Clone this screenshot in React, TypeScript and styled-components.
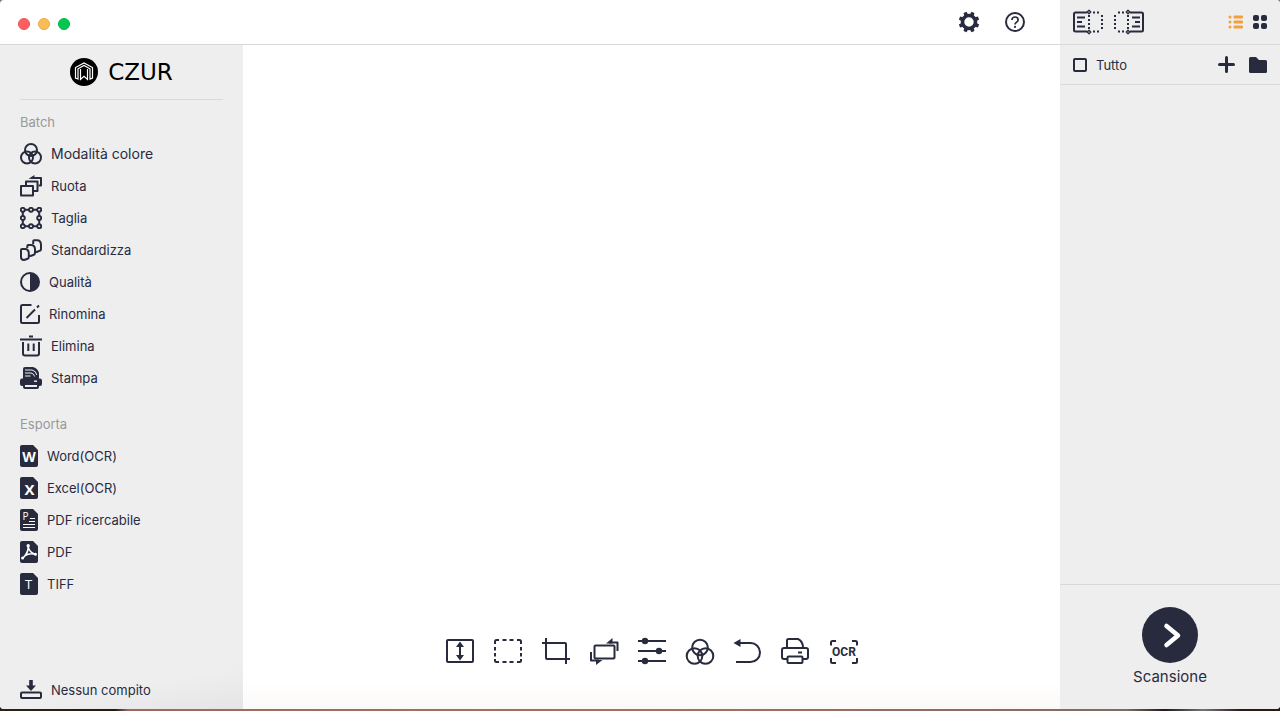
import React from "react";
import styled, { createGlobalStyle } from "styled-components";

const ink = "#282b3e";
const panel = "#eeeeee";
const line = "#d9d9d9";
const accent = "#f2a03d";

const GlobalStyle = createGlobalStyle`
  *, *::before, *::after { box-sizing: border-box; }
  body { margin: 0; background: #777; }
  body, button, input {
    font-family: Inter, "Liberation Sans", sans-serif;
    color: ${ink};
  }
  button {
    padding: 0;
    border: 0;
    background: none;
    cursor: pointer;
  }
  svg { display: block; flex: none; }
`;

/* ---------- Window frame ---------- */

const Desktop = styled.div`
  min-height: 100vh;
  display: flex;
  padding-bottom: 2px;
  background:
    linear-gradient(90deg, #2a2418 0, #241a14 9%, #9b6a5f 10%, #a86e62 50%, #7f6c5e 88%, #211a18 91%, #77737a 94%, #2c1715 97%)
      bottom / 100% 6px no-repeat,
    #777;
`;

const Window = styled.div`
  flex: 1;
  display: flex;
  border-radius: 4px;
  overflow: hidden;
  background: #fff;
`;

const Main = styled.div`
  flex: 1;
  min-width: 0;
  display: flex;
  flex-direction: column;
`;

const TitleBar = styled.header`
  height: 45px;
  display: flex;
  align-items: center;
  justify-content: space-between;
  padding: 0 22px 0 18px;
  border-bottom: 1px solid ${line};
`;

const Lights = styled.div`
  display: flex;
  gap: 8px;
  padding-top: 4px;
`;

const Light = styled.button<{ $color: string; $edge: string }>`
  width: 12px;
  height: 12px;
  border: 1px solid ${(p) => p.$edge};
  border-radius: 50%;
  background: ${(p) => p.$color};
`;

const TitleActions = styled.div`
  display: flex;
`;

const TitleButton = styled.button`
  width: 46px;
  height: 44px;
  display: grid;
  place-items: center;
`;

const Body = styled.div`
  flex: 1;
  display: flex;
`;

/* ---------- Sidebar ---------- */

const Sidebar = styled.aside`
  width: 243px;
  flex: none;
  display: flex;
  flex-direction: column;
  padding: 0 20px 3px;
  background: linear-gradient(170deg, transparent 94%, rgba(0, 0, 0, 0.04)) ${panel};
`;

const Brand = styled.div`
  height: 55px;
  display: flex;
  align-items: center;
  justify-content: center;
  gap: 10px;
  margin-bottom: 6px;
  border-bottom: 1px solid ${line};
`;

const BrandName = styled.span`
  font: 23px/28px "DejaVu Sans", sans-serif;
  color: #000;
`;

const Group = styled.section`
  margin-bottom: 14px;
`;

const GroupTitle = styled.h2`
  margin: 0;
  font-size: 13px;
  line-height: 32px;
  font-weight: 400;
  color: #999;
`;

const List = styled.ul`
  margin: 0;
  padding: 0;
  list-style: none;
`;

const SideButton = styled.button<{ $large?: boolean }>`
  width: 100%;
  height: 32px;
  display: flex;
  align-items: center;
  gap: 9px;
  font-size: ${(p) => (p.$large ? 14 : 13)}px;
  line-height: 20px;
  text-align: left;
`;

const SideFooter = styled.div`
  margin-top: auto;
`;

/* ---------- Canvas ---------- */

const Canvas = styled.main`
  flex: 1;
  min-width: 0;
  display: flex;
  flex-direction: column;
  justify-content: flex-end;
  padding-bottom: 34px;
  background: linear-gradient(#fff 96%, #fbf9f8);
`;

const Toolbar = styled.div`
  display: flex;
  justify-content: center;
`;

const ToolButton = styled.button`
  width: 48px;
  height: 48px;
  display: grid;
  place-items: center;
`;

/* ---------- Page panel ---------- */

const PagePanel = styled.aside`
  width: 220px;
  flex: none;
  display: flex;
  flex-direction: column;
  background: ${panel};
`;

const PanelRow = styled.div<{ $height: number }>`
  height: ${(p) => p.$height}px;
  display: flex;
  align-items: center;
  justify-content: space-between;
  padding: 0 13px;
  border-bottom: 1px solid ${line};
`;

const Cluster = styled.div<{ $gap: number }>`
  display: flex;
  align-items: center;
  gap: ${(p) => p.$gap}px;
`;

const SelectAll = styled.label`
  display: flex;
  align-items: center;
  gap: 9px;
  font-size: 13px;
  line-height: 20px;
`;

const Check = styled.input`
  appearance: none;
  width: 14px;
  height: 14px;
  margin: 0;
  border: 2px solid ${ink};
  border-radius: 2px;
  &:checked { background: ${ink}; }
`;

const PageList = styled.div`
  flex: 1;
`;

const ScanArea = styled.footer`
  height: 125px;
  display: flex;
  justify-content: center;
  align-items: flex-start;
  padding-top: 22px;
  border-top: 1px solid ${line};
`;

const ScanButton = styled.button`
  display: flex;
  flex-direction: column;
  align-items: center;
  gap: 2px;
  font-size: 15px;
  line-height: 24px;
`;

/* ---------- Icons ---------- */

type IconProps = { w: number; h: number; sw?: number; children: React.ReactNode };

const Icon = ({ w, h, sw = 2, children }: IconProps) => (
  <svg
    width={w}
    height={h}
    viewBox={`0 0 ${w} ${h}`}
    fill="none"
    stroke={ink}
    strokeWidth={sw}
    strokeLinejoin="round"
    aria-hidden="true"
  >
    {children}
  </svg>
);

const ColorIcon = () => (
  <Icon w={22} h={22}>
    <circle cx="11" cy="7" r="6" />
    <circle cx="7" cy="14.500" r="6" />
    <circle cx="15" cy="14.500" r="6" />
  </Icon>
);

const RotateIcon = () => (
  <Icon w={22} h={22}>
    <rect x="1" y="11" width="12" height="9.500" />
    <path d="M6 10.500V6.500H17.500V16H14" />
    <path d="M11 3H21V10.500H18.500" />
    <path d="M8.500 3.800L14.500 0V4Z" fill={ink} stroke="none" />
  </Icon>
);

const CropFrameIcon = () => (
  <Icon w={22} h={22}>
    <path d="M5 2.800H9M13 2.800H17M5 19.200H9M13 19.200H17M2.800 5V9M2.800 13V17M19.200 5V9M19.200 13V17" />
    {[
      [2.8, 2.8], [11, 2.8], [19.2, 2.8],
      [2.8, 11], [19.2, 11],
      [2.8, 19.2], [11, 19.2], [19.2, 19.2],
    ].map(([x, y]) => (
      <circle key={`${x}-${y}`} cx={x} cy={y} r="2" strokeWidth="1.9" />
    ))}
  </Icon>
);

const StandardIcon = () => (
  <Icon w={22} h={22}>
    <path d="M1 11Q1 10 2 10H5C8 10 8.800 12 8.800 14.500V18Q8.800 19.300 7.700 19.700L4 21C2 21 1 20 1 18Z" />
    <path d="M7.300 9V7Q7.300 6 8.300 6H11C14 6 15 8 15 10.500V14Q15 15.300 13.900 15.700L10.500 17L9 16.600" />
    <path d="M13.200 5V2.200Q13.200 1.200 14.200 1.200H17C20 1.200 21 3.500 21 6V10Q21 11.300 19.900 11.700L16.800 13L15.200 12.600" />
  </Icon>
);

const QualityIcon = () => (
  <Icon w={20} h={20}>
    <circle cx="10" cy="10" r="9" />
    <path d="M10 1a9 9 0 0 1 0 18z" fill={ink} stroke="none" />
  </Icon>
);

const RenameIcon = () => (
  <Icon w={20} h={20}>
    <path d="M11.500 1H2.500Q1 1 1 2.500V17.500Q1 19 2.500 19H17.500Q19 19 19 17.500V11" />
    <path d="M6.500 14L15 5.500M17 3.500L19 1.500" />
  </Icon>
);

const TrashIcon = () => (
  <Icon w={22} h={22}>
    <path d="M9 1.500H13M0 4.500H22M3 7V18.500Q3 20.500 5 20.500H17Q19 20.500 19 18.500V7M8.300 8.500V16M13.700 8.500V16" />
  </Icon>
);

const PrintStackIcon = () => (
  <Icon w={22} h={22}>
    <path d="M3 2Q3 0 5 0H13Q18.500 1.500 19 7V12H3Z" fill={ink} stroke="none" />
    <path d="M5 3H12Q16 3.800 16.800 8M5 6H11Q14 6.500 14.600 9.500M5 9H10.500" stroke={panel} strokeWidth="1" />
    <rect x="0" y="11.500" width="22" height="7.500" rx="2" fill={ink} stroke="none" />
    <rect x="14" y="13.500" width="3" height="1.400" fill={panel} stroke="none" />
    <rect x="4" y="17" width="14" height="4" rx="1" fill={panel} />
  </Icon>
);

const DocIcon = ({ children }: { children: React.ReactNode }) => (
  <Icon w={18} h={22}>
    <path d="M2 0H13L18 5V20Q18 22 16 22H2Q0 22 0 20V2Q0 0 2 0Z" fill={ink} stroke="none" />
    {children}
  </Icon>
);

const DocLetter = styled.text<{ $size: number; $weight: number }>`
  font-family: "Open Sans", sans-serif;
  font-size: ${(p) => p.$size}px;
  font-weight: ${(p) => p.$weight};
  fill: #fff;
  stroke: none;
  text-anchor: middle;
`;

const WordIcon = () => (
  <DocIcon><DocLetter $size={14} $weight={700} x="9" y="17">W</DocLetter></DocIcon>
);

const ExcelIcon = () => (
  <DocIcon><DocLetter $size={15} $weight={700} x="9.500" y="18">X</DocLetter></DocIcon>
);

const SearchPdfIcon = () => (
  <DocIcon>
    <DocLetter $size={10} $weight={400} x="5.500" y="11">P</DocLetter>
    <path d="M10 9.500H15M9 12.500H15M3 15.500H15M3 18.500H15" stroke="#fff" strokeWidth="1" />
  </DocIcon>
);

const PdfIcon = () => (
  <DocIcon>
    <g stroke="#fff" strokeWidth="1.600">
      <path d="M8.200 5.500C8.500 9.500 7 13 2.800 17.200M8.200 5.500C8.800 9.500 11 12 15.500 13.200M5 14.500C8 12.800 11.500 12.300 15 13.200" />
      <circle cx="8.200" cy="4.800" r=".9" />
      <circle cx="2.600" cy="17" r=".7" />
      <circle cx="15.500" cy="13.200" r=".7" />
    </g>
  </DocIcon>
);

const TiffIcon = () => (
  <DocIcon><DocLetter $size={13} $weight={400} x="8.500" y="16">T</DocLetter></DocIcon>
);

const TaskIcon = () => (
  <Icon w={22} h={22}>
    <rect x="1" y="13.500" width="20" height="5.500" rx="1" />
    <path d="M9.200 1H12.800V6.500H16L11 12L6 6.500H9.200Z" fill={ink} stroke="none" />
  </Icon>
);

const FitIcon = () => (
  <Icon w={30} h={30}>
    <rect x="2" y="4" width="26" height="22" rx="1" />
    <path d="M15 9V21" />
    <path d="M15 5.500L19 11H11ZM15 24.500L19 19H11Z" fill={ink} stroke="none" />
  </Icon>
);

const SelectIcon = () => (
  <Icon w={30} h={30}>
    <path d="M2 8V5.500Q2 4 3.500 4H6M9.500 4H13.500M16.500 4H20.500M24 4H26.500Q28 4 28 5.500V8M28 11V14.500M28 17V20.500M28 23V24.500Q28 26 26.500 26H24M20.500 26H16.500M13.500 26H9.500M6 26H3.500Q2 26 2 24.500V23M2 20.500V17M2 14.500V11" />
  </Icon>
);

const CropIcon = () => (
  <Icon w={30} h={30}>
    <path d="M5 2V22Q5 23 6 23H29M1 7H24Q25 7 25 8V28" />
  </Icon>
);

const RotatePageIcon = () => (
  <Icon w={30} h={30}>
    <rect x="5.500" y="9.500" width="20" height="13" rx="1" />
    <path d="M20 6.500H28.500V15M2 16V24.500H10" />
    <path d="M17 7.500L23.500 2V7.500ZM13.500 24L7 29V24Z" fill={ink} stroke="none" />
  </Icon>
);

const SlidersIcon = () => (
  <Icon w={30} h={30}>
    <path d="M1 5H29M1 15H29M1 25H29" />
    <g fill={ink} stroke="none">
      <circle cx="8" cy="5" r="3.200" />
      <circle cx="22" cy="15" r="3.200" />
      <circle cx="8" cy="25" r="3.200" />
    </g>
  </Icon>
);

const ColorLargeIcon = () => (
  <Icon w={30} h={30}>
    <circle cx="15" cy="11.500" r="7.800" />
    <circle cx="9.500" cy="20" r="7.800" />
    <circle cx="20.500" cy="20" r="7.800" />
  </Icon>
);

const UndoIcon = () => (
  <Icon w={30} h={30}>
    <path d="M5 7H17.500a9.500 9.500 0 0 1 0 19H3" />
    <path d="M0.500 7L7.500 3V11Z" fill={ink} stroke="none" />
  </Icon>
);

const PrinterIcon = () => (
  <Icon w={30} h={30}>
    <path d="M6 11V4.500Q6 3 7.500 3H17Q21.500 5 22 11" />
    <path d="M6 23H3Q1 23 1 21V14Q1 12 3 12H25Q27 12 27 14V21Q27 23 25 23H22M17 16.500H21" />
    <rect x="6.500" y="20.500" width="15" height="6.500" rx="1" />
  </Icon>
);

const OcrLabel = styled.text`
  font: 700 12px Roboto, sans-serif;
  fill: ${ink};
  stroke: none;
  text-anchor: middle;
`;

const OcrIcon = () => (
  <Icon w={30} h={30}>
    <path d="M2 9.500V6.500Q2 5 3.500 5H7M23 5H26.500Q28 5 28 6.500V9.500M28 22V25.500Q28 27 26.500 27H23M7 27H3.500Q2 27 2 25.500V22" />
    <OcrLabel x="15" y="20">OCR</OcrLabel>
  </Icon>
);

const GearIcon = () => (
  <Icon w={22} h={22}>
    <circle cx="11" cy="11" r="6.500" strokeWidth="3.600" />
    {[22.5, 67.5, 112.5, 157.5, 202.5, 247.5, 292.5, 337.5].map((a) => (
      <path key={a} d="M8.800 4.500L9.400 0.700H12.600L13.200 4.500Z" fill={ink} stroke="none" transform={`rotate(${a} 11 11)`} />
    ))}
  </Icon>
);

const HelpIcon = () => (
  <Icon w={20} h={20}>
    <circle cx="10" cy="10" r="9" />
    <path d="M6.900 8C6.900 6.200 8.200 5 10 5S13.100 6.200 13.100 7.900C13.100 10 10 10.200 10 12.600" strokeWidth="1.700" />
    <circle cx="10" cy="14.900" r="1.100" fill={ink} stroke="none" />
  </Icon>
);

const SplitIcon = ({ mirrored }: { mirrored?: boolean }) => (
  <Icon w={30} h={26}>
    <g transform={mirrored ? "translate(30 0) scale(-1 1)" : undefined}>
      <path d="M14 3.500H2.500Q1 3.500 1 5V21Q1 22.500 2.500 22.500H14" />
      <path d="M4 8.500H12M4 13H9M4 17.500H12" />
      <path d="M16 6V21M20 3.500H28M29 6V22M20 22.500H28" strokeDasharray="2 2" />
      <path d="M16 1.200L17.800 3L16 4.800L14.200 3ZM16 21.200L17.800 23L16 24.800L14.200 23Z" fill={panel} strokeWidth="1.300" />
    </g>
  </Icon>
);

const ListIcon = () => (
  <Icon w={15} h={14}>
    <g fill={accent} stroke="none">
      {[0.5, 5.5, 10.5].map((y) => (
        <React.Fragment key={y}>
          <rect x="0.500" y={y} width="3" height="3" rx="1.500" />
          <rect x="5.500" y={y} width="9.500" height="3" rx="1.200" />
        </React.Fragment>
      ))}
    </g>
  </Icon>
);

const GridIcon = () => (
  <Icon w={14} h={14}>
    <g fill={ink} stroke="none">
      <rect x="0" y="0" width="6" height="6" rx="2" />
      <rect x="8" y="0" width="6" height="6" rx="2" />
      <rect x="0" y="8" width="6" height="6" rx="2" />
      <rect x="8" y="8" width="6" height="6" rx="2" />
    </g>
  </Icon>
);

const PlusIcon = () => (
  <Icon w={17} h={17} sw={3}>
    <path d="M8.500 1.500V15.500M1.500 8.500H15.500" strokeLinecap="round" />
  </Icon>
);

const FolderIcon = () => (
  <Icon w={18} h={16}>
    <path d="M0 1.500Q0 0 1.500 0H7L10 3H16.500Q18 3 18 4.500V14.500Q18 16 16.500 16H1.500Q0 16 0 14.500Z" fill={ink} stroke="none" />
  </Icon>
);

const BrandMark = () => (
  <svg width="28" height="28" viewBox="0 0 28 28" fill="none" stroke="#fff" strokeWidth="1.200" aria-hidden="true">
    <circle cx="14" cy="14" r="14" fill="#000" stroke="none" />
    <path d="M8 21L5.500 20V9.500L14 5L22.500 9.500V20L20 21V10.800L14 7.500L8 10.800Z" />
    <path d="M10.500 11V21.500L14 18.300L17.500 21.500V11" />
  </svg>
);

const ScanIcon = () => (
  <svg width="56" height="56" viewBox="0 0 56 56" fill="none" aria-hidden="true">
    <circle cx="28" cy="28" r="28" fill={ink} />
    <path d="M24.500 19L36 28.500L24.500 38" stroke="#fff" strokeWidth="4.500" strokeLinecap="round" strokeLinejoin="round" />
  </svg>
);

/* ---------- Data ---------- */

type Item = { label: string; icon: React.ComponentType; large?: boolean };

const batch: Item[] = [
  { label: "Modalità colore", icon: ColorIcon, large: true },
  { label: "Ruota", icon: RotateIcon },
  { label: "Taglia", icon: CropFrameIcon },
  { label: "Standardizza", icon: StandardIcon },
  { label: "Qualità", icon: QualityIcon },
  { label: "Rinomina", icon: RenameIcon },
  { label: "Elimina", icon: TrashIcon },
  { label: "Stampa", icon: PrintStackIcon },
];

const exportsList: Item[] = [
  { label: "Word(OCR)", icon: WordIcon },
  { label: "Excel(OCR)", icon: ExcelIcon },
  { label: "PDF ricercabile", icon: SearchPdfIcon },
  { label: "PDF", icon: PdfIcon },
  { label: "TIFF", icon: TiffIcon },
];

const tools: Item[] = [
  { label: "Adatta", icon: FitIcon },
  { label: "Seleziona", icon: SelectIcon },
  { label: "Taglia", icon: CropIcon },
  { label: "Ruota", icon: RotatePageIcon },
  { label: "Regola", icon: SlidersIcon },
  { label: "Modalità colore", icon: ColorLargeIcon },
  { label: "Annulla", icon: UndoIcon },
  { label: "Stampa", icon: PrinterIcon },
  { label: "Riconosci testo", icon: OcrIcon },
];

const SideGroup = ({ title, items }: { title: string; items: Item[] }) => (
  <Group>
    <GroupTitle>{title}</GroupTitle>
    <List>
      {items.map(({ label, icon: Glyph, large }) => (
        <li key={label}>
          <SideButton type="button" $large={large}>
            <Glyph />
            {label}
          </SideButton>
        </li>
      ))}
    </List>
  </Group>
);

export default function App() {
  return (
    <>
      <GlobalStyle />
      <Desktop>
        <Window>
          <Main>
            <TitleBar>
              <Lights>
                <Light type="button" aria-label="Chiudi" $color="#fc5f5d" $edge="#ea5557" />
                <Light type="button" aria-label="Riduci" $color="#fbbb56" $edge="#eaa94b" />
                <Light type="button" aria-label="Ingrandisci" $color="#04c751" $edge="#05b548" />
              </Lights>
              <TitleActions>
                <TitleButton type="button" aria-label="Impostazioni"><GearIcon /></TitleButton>
                <TitleButton type="button" aria-label="Aiuto"><HelpIcon /></TitleButton>
              </TitleActions>
            </TitleBar>
            <Body>
              <Sidebar>
                <Brand>
                  <BrandMark />
                  <BrandName>CZUR</BrandName>
                </Brand>
                <SideGroup title="Batch" items={batch} />
                <SideGroup title="Esporta" items={exportsList} />
                <SideFooter>
                  <SideButton type="button">
                    <TaskIcon />
                    Nessun compito
                  </SideButton>
                </SideFooter>
              </Sidebar>
              <Canvas>
                <Toolbar role="toolbar">
                  {tools.map(({ label, icon: Glyph }) => (
                    <ToolButton key={label} type="button" aria-label={label}>
                      <Glyph />
                    </ToolButton>
                  ))}
                </Toolbar>
              </Canvas>
            </Body>
          </Main>
          <PagePanel>
            <PanelRow $height={45}>
              <Cluster $gap={11}>
                <button type="button" aria-label="Pagina sinistra"><SplitIcon /></button>
                <button type="button" aria-label="Pagina destra"><SplitIcon mirrored /></button>
              </Cluster>
              <Cluster $gap={10}>
                <button type="button" aria-label="Elenco"><ListIcon /></button>
                <button type="button" aria-label="Griglia"><GridIcon /></button>
              </Cluster>
            </PanelRow>
            <PanelRow $height={40}>
              <SelectAll>
                <Check type="checkbox" />
                Tutto
              </SelectAll>
              <Cluster $gap={14}>
                <button type="button" aria-label="Aggiungi"><PlusIcon /></button>
                <button type="button" aria-label="Cartella"><FolderIcon /></button>
              </Cluster>
            </PanelRow>
            <PageList />
            <ScanArea>
              <ScanButton type="button">
                <ScanIcon />
                Scansione
              </ScanButton>
            </ScanArea>
          </PagePanel>
        </Window>
      </Desktop>
    </>
  );
}
